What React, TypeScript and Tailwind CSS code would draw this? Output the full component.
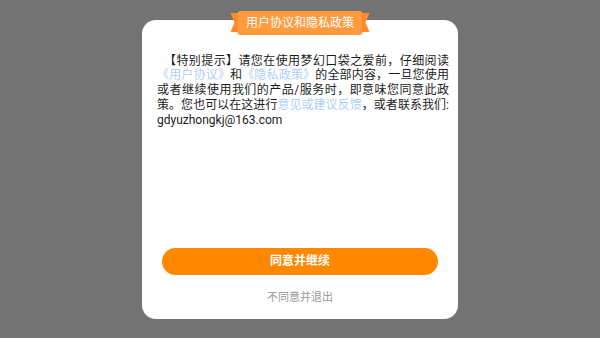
import React from 'react';

const FONT = { fontFamily: 'Roboto, "Noto Sans CJK SC", sans-serif' };

const Ribbon: React.FC = () => (
  <div className="absolute left-1/2 top-[-9px] -translate-x-1/2 flex items-center">
    {/* left tail */}
    <svg width="8" height="19" viewBox="0 0 8 19" className="-mr-px">
      <polygon points="0,0 8,0 8,19 0,19 4,9.5" fill="#ff8a2b" />
    </svg>
    <div className="h-[24px] w-[125px] bg-[#ff9a3d] rounded-[3px] flex items-center justify-center text-white text-[12px] leading-none">
      用户协议和隐私政策
    </div>
    {/* right tail */}
    <svg width="8" height="19" viewBox="0 0 8 19" className="-ml-px">
      <polygon points="0,0 8,0 4,9.5 8,19 0,19" fill="#ff8a2b" />
    </svg>
  </div>
);

const App: React.FC = () => {
  return (
    <div className="w-[600px] h-[338px] bg-[#737373] flex items-center justify-center" style={FONT}>
      <div className="relative w-[316px] h-[299px] bg-white rounded-[14px] flex flex-col">
        <Ribbon />

        <p className="mt-[34px] ml-[15px] w-[292px] text-[12px] leading-[14.75px] text-[#1c1c1c] text-justify indent-[7px]">
          【特别提示】请您在使用梦幻口袋之爱前，仔细阅读<span className="text-[#b0cff3]">《用户协议》</span>和<span className="text-[#b0cff3]">《隐私政策》</span>的全部内容，一旦您使用或者继续使用我们的产品/服务时，即意味您同意此政策。您也可以在这进行<span className="text-[#b0cff3]">意见或建议反馈</span>，或者联系我们: gdyuzhongkj@163.com
        </p>

        <button className="mt-auto mx-[20px] h-[27px] rounded-full bg-[#ff8800] text-white text-[12px] font-bold">
          同意并继续
        </button>
        <div className="mt-[16px] mb-[14px] text-center text-[11px] leading-[14px] text-[#999]">
          不同意并退出
        </div>
      </div>
    </div>
  );
};

export default App;
